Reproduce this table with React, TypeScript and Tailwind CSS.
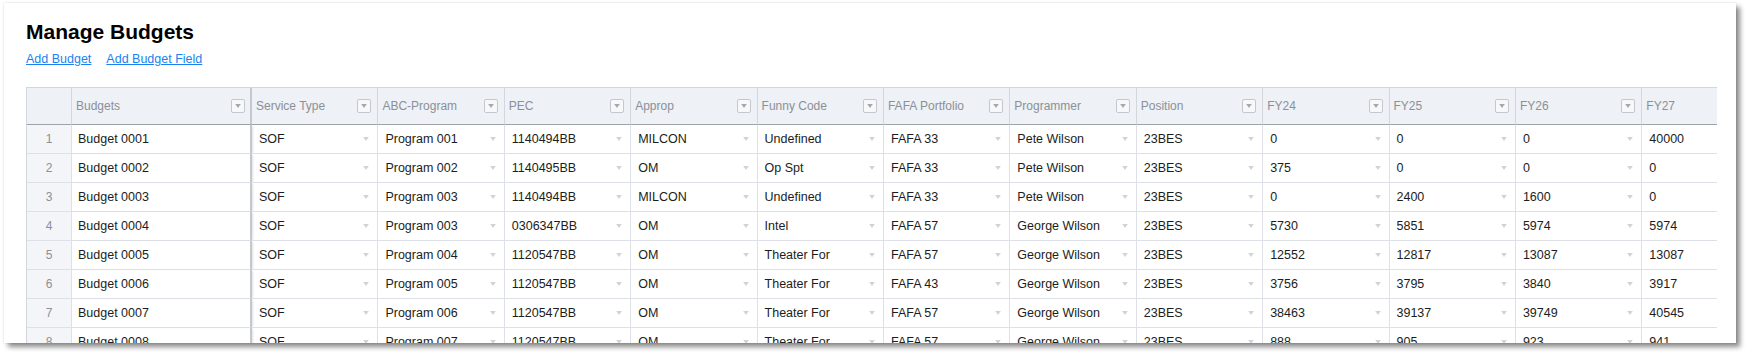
import React from "react";

type Row = string[];

const columns = [
  "Budgets",
  "Service Type",
  "ABC-Program",
  "PEC",
  "Approp",
  "Funny Code",
  "FAFA Portfolio",
  "Programmer",
  "Position",
  "FY24",
  "FY25",
  "FY26",
  "FY27",
];

const rows: Row[] = [
  ["Budget 0001", "SOF", "Program 001", "1140494BB", "MILCON", "Undefined", "FAFA 33", "Pete Wilson", "23BES", "0", "0", "0", "40000"],
  ["Budget 0002", "SOF", "Program 002", "1140495BB", "OM", "Op Spt", "FAFA 33", "Pete Wilson", "23BES", "375", "0", "0", "0"],
  ["Budget 0003", "SOF", "Program 003", "1140494BB", "MILCON", "Undefined", "FAFA 33", "Pete Wilson", "23BES", "0", "2400", "1600", "0"],
  ["Budget 0004", "SOF", "Program 003", "0306347BB", "OM", "Intel", "FAFA 57", "George Wilson", "23BES", "5730", "5851", "5974", "5974"],
  ["Budget 0005", "SOF", "Program 004", "1120547BB", "OM", "Theater For", "FAFA 57", "George Wilson", "23BES", "12552", "12817", "13087", "13087"],
  ["Budget 0006", "SOF", "Program 005", "1120547BB", "OM", "Theater For", "FAFA 43", "George Wilson", "23BES", "3756", "3795", "3840", "3917"],
  ["Budget 0007", "SOF", "Program 006", "1120547BB", "OM", "Theater For", "FAFA 57", "George Wilson", "23BES", "38463", "39137", "39749", "40545"],
  ["Budget 0008", "SOF", "Program 007", "1120547BB", "OM", "Theater For", "FAFA 57", "George Wilson", "23BES", "888", "905", "923", "941"],
];

const Caret = ({ className }: { className?: string }) => (
  <svg width="7" height="5" viewBox="0 0 7 5" className={className}>
    <polygon points="0,0 7,0 3.5,5" fill="currentColor" />
  </svg>
);

const FilterButton = () => (
  <span className="flex h-[14px] w-[14px] shrink-0 items-center justify-center rounded-[2px] border border-[#c4c8ce] bg-[#f7f8fa] text-[#a3a8af]">
    <Caret className="w-[6px] h-[4px]" />
  </span>
);

const App = () => {
  return (
    <div className="h-[358px] w-[1750px] bg-white pl-[4px] pt-[3px] font-['Liberation_Sans',Arial,sans-serif]">
      <div className="h-[340px] w-[1732px] overflow-hidden bg-white pl-[22px] pr-[19px] pt-[15px] shadow-[4px_4px_5px_rgba(0,0,0,0.45),0_0_2px_rgba(0,0,0,0.15)]">
        <h1 className="text-[21px] font-bold leading-[28px] text-black">Manage Budgets</h1>
        <div className="mt-[5px] flex gap-[15px] text-[12.5px] leading-[16px] text-[#1a82ef]">
          <a href="#" className="underline underline-offset-1">Add Budget</a>
          <a href="#" className="underline underline-offset-1">Add Budget Field</a>
        </div>

        <div className="mt-[20px] overflow-hidden">
          <div className="grid w-max grid-cols-[45px_180px_repeat(12,126.4px)] border-l border-t border-[#d3d7dd]">
            {/* header */}
            <div className="h-[37px] border-b border-r border-b-[#9ea3aa] border-r-[#d3d7dd] bg-[#eef1f5]" />
            {columns.map((c, i) => (
              <div
                key={c}
                className={
                  i === 0
                    ? "flex h-[37px] items-center justify-between border-b border-r-2 border-b-[#9ea3aa] border-r-[#c3c8cf] bg-[#eef1f5] pl-[4px] pr-[5px] text-[12px] text-[#8b9098]"
                    : "flex h-[37px] items-center justify-between border-b border-r border-b-[#9ea3aa] border-r-[#d3d7dd] bg-[#eef1f5] pl-[4px] pr-[6px] text-[12px] text-[#8b9098]"
                }
              >
                <span>{c}</span>
                <FilterButton />
              </div>
            ))}

            {/* body */}
            {rows.map((r, ri) => (
              <React.Fragment key={ri}>
                <div className="flex h-[29px] items-center justify-center border-b border-r border-[#dde1e7] bg-[#f3f5f8] text-[12px] text-[#8b9098]">
                  {ri + 1}
                </div>
                {r.map((v, ci) =>
                  ci === 0 ? (
                    <div
                      key={ci}
                      className="flex h-[29px] items-center border-b border-r-2 border-b-[#dde1e7] border-r-[#c3c8cf] pl-[6px] text-[12.5px] text-[#1b1d20] shadow-[2px_0_2px_-1px_rgba(0,0,0,0.12)]"
                    >
                      {v}
                    </div>
                  ) : (
                    <div
                      key={ci}
                      className="flex h-[29px] items-center justify-between border-b border-r border-[#dde1e7] pl-[7px] pr-[8px] text-[12.5px] text-[#1b1d20]"
                    >
                      <span>{v}</span>
                      <Caret className="h-[4px] w-[6px] text-[#cfd3d8]" />
                    </div>
                  )
                )}
              </React.Fragment>
            ))}
          </div>
        </div>
      </div>
    </div>
  );
};

export default App;
